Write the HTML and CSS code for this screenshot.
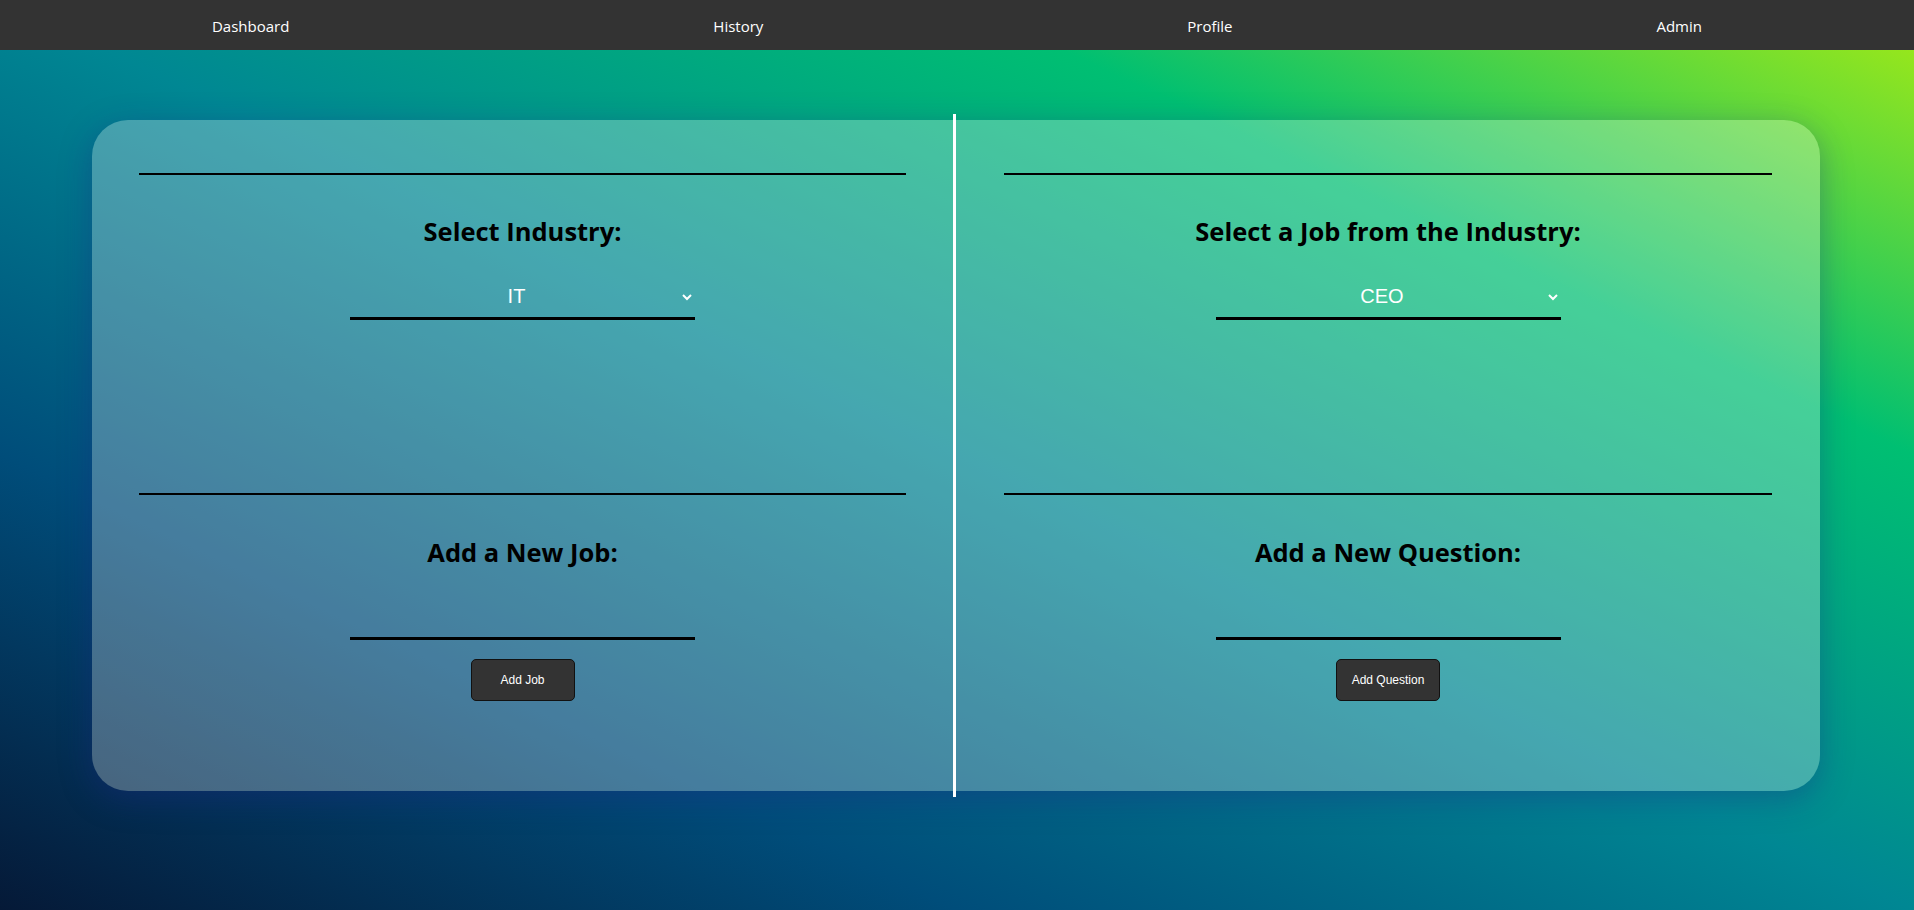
FILE: index.html
```html
<!DOCTYPE html>
<html lang="en">
<head>
<meta charset="utf-8">
<title>Admin</title>
<link rel="stylesheet" href="styles.css">
</head>
<body>
<nav class="navbar">
  <a class="nav-link" href="#">Dashboard</a>
  <a class="nav-link" href="#">History</a>
  <a class="nav-link" href="#">Profile</a>
  <a class="nav-link" href="#">Admin</a>
</nav>
<main class="card">
  <section class="column column-left">
    <div class="block block-top">
      <hr class="rule">
      <h2 class="title">Select Industry:</h2>
      <select class="picker">
        <option>IT</option>
        <option>Finance</option>
        <option>Healthcare</option>
      </select>
    </div>
    <div class="block">
      <hr class="rule">
      <h2 class="title">Add a New Job:</h2>
      <input class="field" type="text">
      <button class="btn" type="button">Add Job</button>
    </div>
  </section>
  <div class="divider"></div>
  <section class="column column-right">
    <div class="block block-top">
      <hr class="rule">
      <h2 class="title">Select a Job from the Industry:</h2>
      <select class="picker">
        <option>CEO</option>
        <option>Developer</option>
        <option>Manager</option>
      </select>
    </div>
    <div class="block">
      <hr class="rule">
      <h2 class="title">Add a New Question:</h2>
      <input class="field" type="text" autofocus>
      <button class="btn" type="button">Add Question</button>
    </div>
  </section>
</main>
</body>
</html>
```
FILE: styles.css
```css
html, body {
  margin: 0;
  padding: 0;
}
body {
  min-height: 100vh;
  font-family: "Open Sans", "Noto Sans", sans-serif;
  background: linear-gradient(to right top, #051937, #004d7a, #008793, #00bf72, #a8eb12);
}
.navbar {
  height: 50px;
  background: #333;
  display: flex;
  justify-content: space-around;
  align-items: center;
}
.nav-link {
  color: #fff;
  text-decoration: none;
  font-size: 15px;
  line-height: 20px;
  padding-top: 2px;
}
.card {
  width: 1728px;
  margin: 70px 94px 0 92px;
  box-sizing: border-box;
  height: 671px;
  display: flex;
  border-radius: 36px;
  background: rgba(255, 255, 255, 0.27);
  box-shadow: 0 8px 32px 0 rgba(31, 38, 135, 0.37);
}
.column {
  padding: 53px 47px 0;
  display: flex;
  flex-direction: column;
}
.column-left {
  flex: 0 0 861px;
  box-sizing: border-box;
}
.column-right {
  flex: 1;
  padding-left: 48px;
  padding-right: 48px;
}
.divider {
  flex: 0 0 3px;
  background: #fff;
  margin: -6px 0;
}
.block {
  display: flex;
  flex-direction: column;
  align-items: center;
}
.block-top {
  height: 320px;
}
.rule {
  align-self: stretch;
  margin: 0;
  border: none;
  height: 2px;
  background: #000;
}
.title {
  margin: 40px 0 0;
  font-size: 25.5px;
  line-height: 32px;
  font-weight: 700;
  color: #000;
}
.block + .block .title {
  margin-top: 41px;
}
.picker {
  margin-top: 27px;
  width: 345px;
  height: 46px;
  padding: 10px;
  font-family: "Liberation Sans", Arial, sans-serif;
  font-size: 20px;
  color: #fff;
  background: transparent;
  border: none;
  border-bottom: 3px solid #000;
  text-align: center;
  text-align-last: center;
  outline: none;
}
.picker option {
  color: #000;
}
.field {
  margin-top: 18px;
  width: 345px;
  box-sizing: border-box;
  height: 54px;
  padding: 10px 1px 20px 10px;
  font-family: "Liberation Sans", Arial, sans-serif;
  font-size: 18px;
  line-height: 21px;
  color: #fff;
  caret-color: #fff;
  background: transparent;
  border: none;
  border-bottom: 3px solid #000;
  text-align: right;
  outline: none;
}
.btn {
  margin-top: 19px;
  width: 104px;
  height: 42px;
  padding: 0;
  font-family: "Liberation Sans", Arial, sans-serif;
  font-size: 12px;
  color: #fff;
  background: #333;
  border: 1px solid #111;
  border-radius: 5px;
  cursor: pointer;
}
```
